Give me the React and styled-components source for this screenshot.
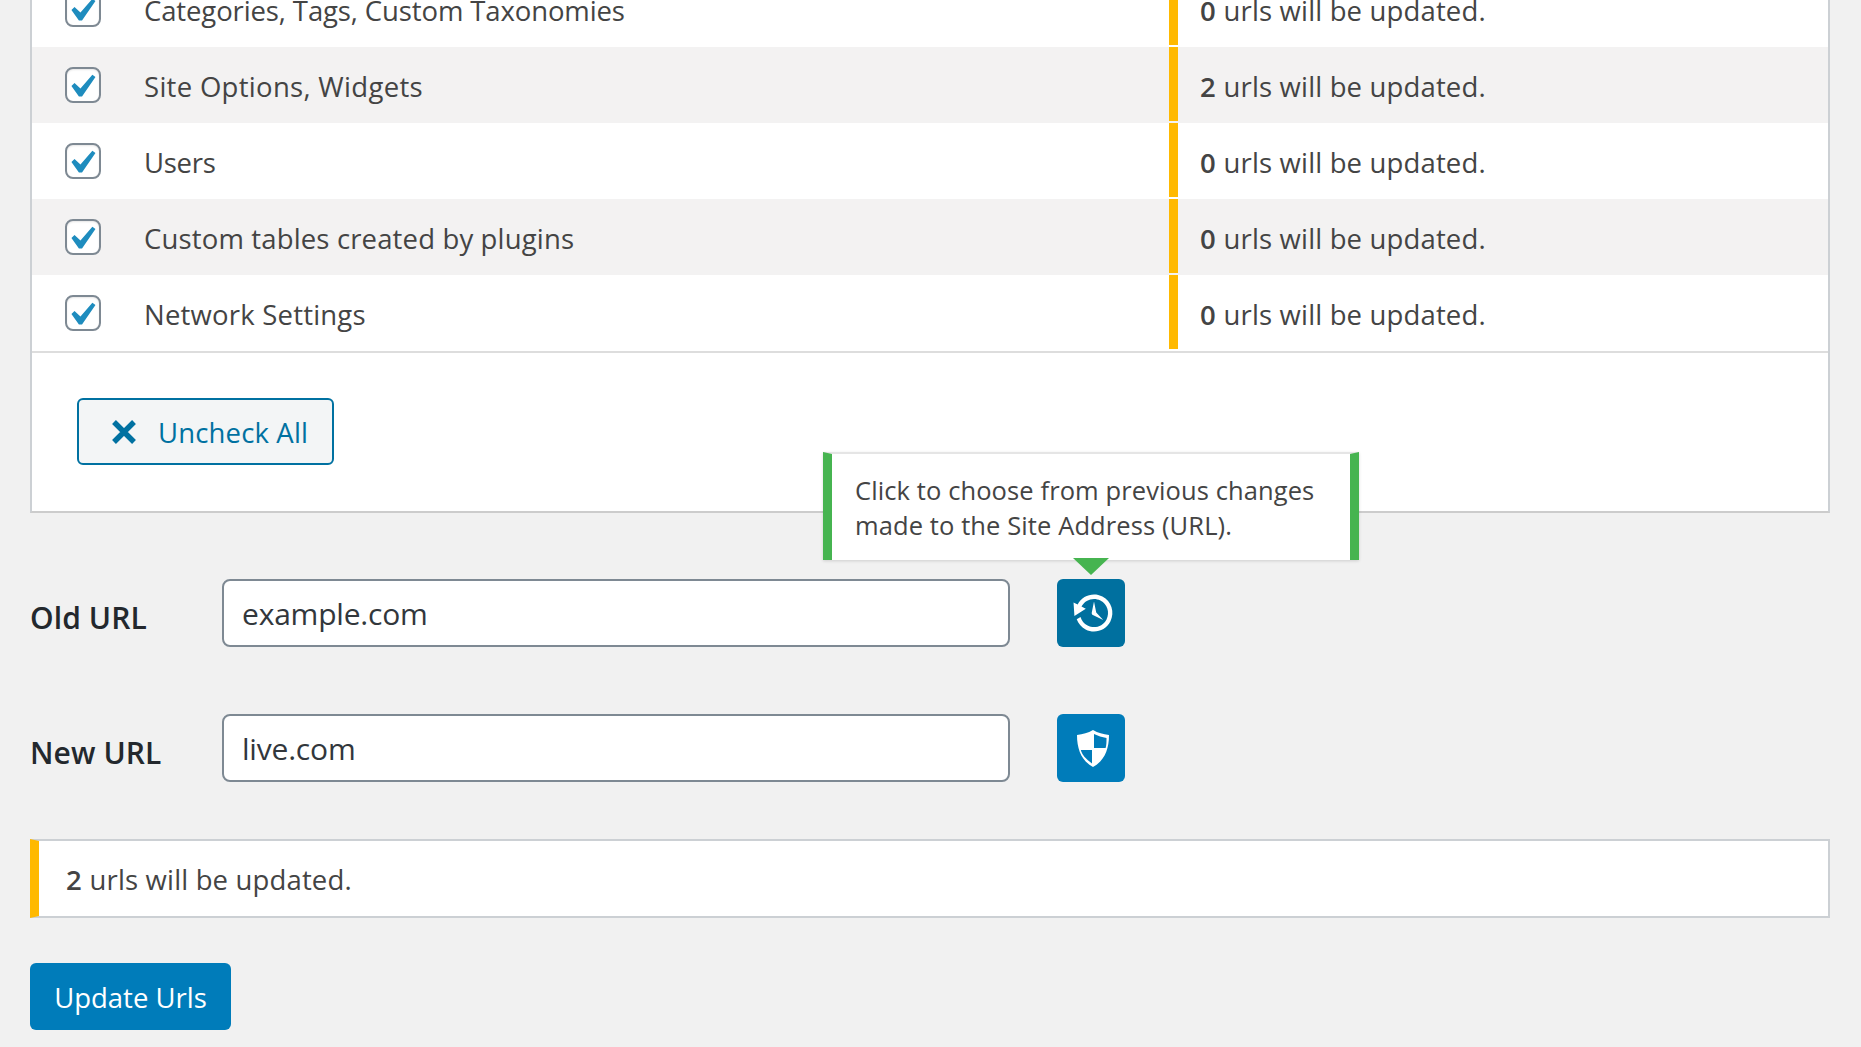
import React from 'react'
import styled, { createGlobalStyle } from 'styled-components'

const GlobalStyle = createGlobalStyle`
  html, body {
    margin: 0;
    padding: 0;
    background: #f1f1f1;
  }
  * {
    box-sizing: border-box;
  }
`

const Page = styled.div`
  width: 1861px;
  height: 1047px;
  overflow: hidden;
  padding: 0 31px 0 30px;
  font-family: "Open Sans", "Liberation Sans", sans-serif;
  font-size: 27.5px;
  letter-spacing: 0.15px;
  color: #444;
`

const Panel = styled.div`
  margin-top: -29px;
  background: #fff;
  border: 2px solid #ccd0d4;
  border-top: 0;
  border-bottom-color: #ccc;
`

const Row = styled.div`
  display: flex;
  height: 76px;
  background: ${(p) => (p.$alt ? '#f3f2f2' : '#fff')};
`

const RowLabel = styled.div`
  width: 1137px;
  display: flex;
  align-items: center;
  padding-left: 33px;
`

const RowText = styled.span`
  padding-top: 2px;
  letter-spacing: ${(p) => p.$track}px;
`

const CheckBox = styled.span`
  width: 36px;
  height: 36px;
  flex: none;
  display: flex;
  align-items: center;
  justify-content: center;
  margin-right: 43px;
  background: #fff;
  border: 2px solid #7e8993;
  border-radius: 8px;
  box-shadow: inset 0 1px 2px rgba(0, 0, 0, 0.1);
`

const Bar = styled.div`
  width: 9px;
  flex: none;
  margin-bottom: 2px;
  background: #ffb900;
`

const RowResult = styled.div`
  display: flex;
  align-items: center;
  padding: 2px 0 0 22px;
`

const Count = styled.b`
  font-weight: 600;
  margin-right: 0.28em;
`

const PanelFooter = styled.div`
  border-top: 2px solid #ddd;
  padding: 45px 0 46px 45px;
`

const UncheckButton = styled.button`
  display: flex;
  align-items: center;
  width: 257px;
  height: 67px;
  padding: 0 0 0 32px;
  font: inherit;
  letter-spacing: inherit;
  color: #0071a1;
  background: #f3f5f6;
  border: 2px solid #0071a1;
  border-radius: 6px;
`

const ButtonLabel = styled.span`
  margin-left: 21px;
  padding-top: 2px;
`

const UrlRow = styled.div`
  display: flex;
  align-items: center;
  height: 68px;
  margin-top: ${(p) => p.$top}px;
`

const UrlLabel = styled.label`
  width: 192px;
  padding-top: 8px;
  font-weight: 600;
  font-size: 30px;
  letter-spacing: 0.1px;
  color: #23282d;
`

const UrlInput = styled.div`
  width: 788px;
  height: 68px;
  display: flex;
  align-items: center;
  padding: 1px 0 0 18px;
  font-size: 30px;
  letter-spacing: -0.2px;
  color: #32373c;
  background: #fff;
  border: 2px solid #7e8993;
  border-radius: 8px;
`

const IconWrap = styled.div`
  position: relative;
  margin-left: 47px;
`

const IconButton = styled.button`
  width: 68px;
  height: 68px;
  display: flex;
  align-items: center;
  justify-content: center;
  padding: 0 0 0 ${(p) => p.$shift}px;
  border: 0;
  border-radius: 6px;
  background: ${(p) => p.$bg};
`

const Tooltip = styled.div`
  position: absolute;
  left: 50%;
  bottom: calc(100% + 19px);
  transform: translateX(-50%);
  width: 536px;
  height: 108px;
  padding: 19px 0 0 23px;
  font-size: 25.5px;
  letter-spacing: 0.1px;
  line-height: 35px;
  white-space: nowrap;
  background: #fff;
  border-left: 9px solid #46b450;
  border-right: 9px solid #46b450;
  border-top: 2px solid #e5e5e5;
  box-shadow: 0 1px 3px rgba(0, 0, 0, 0.15);

  &::after {
    content: '';
    position: absolute;
    left: 50%;
    top: 100%;
    margin: -2px 0 0 -18px;
    border-left: 18px solid transparent;
    border-right: 18px solid transparent;
    border-top: 17px solid #46b450;
  }
`

const Notice = styled.div`
  height: 79px;
  margin-top: 57px;
  display: flex;
  align-items: center;
  padding: 1px 0 0 27px;
  background: #fff;
  border: 2px solid #ccd0d4;
  border-left: 9px solid #ffb900;
`

const UpdateButton = styled.button`
  display: block;
  width: 201px;
  height: 67px;
  margin-top: 45px;
  padding: 1px 0 0;
  font: inherit;
  letter-spacing: 0;
  color: #fff;
  background: #007cba;
  border: 0;
  border-radius: 6px;
`

const CheckMark = () => (
  <svg width="25" height="23" viewBox="5.6 4.6 10.8 9.8">
    <path fill="#1e8cbe" d="M14.83 4.89l1.34.94-5.81 8.38H9.02L5.78 9.67l1.34-1.25 2.57 2.4z" />
  </svg>
)

const CrossIcon = () => (
  <svg width="26" height="26" viewBox="0 0 26 26">
    <path d="M3 3 L23 23 M23 3 L3 23" stroke="#0071a1" strokeWidth="5.4" fill="none" />
  </svg>
)

const HistoryIcon = () => (
  <svg width="46" height="46" viewBox="0 0 20 20">
    <path
      fill="#fff"
      d="M13.65 2.88c3.93 2.01 5.48 6.84 3.47 10.77s-6.83 5.48-10.77 3.47c-1.87-.96-3.2-2.56-3.86-4.4l1.64-1.03c.45 1.57 1.52 2.95 3.08 3.76 3.01 1.54 6.69.35 8.23-2.66 1.55-3.01.36-6.69-2.65-8.24C9.78 3.01 6.1 4.2 4.56 7.21l1.88.97-4.95 3.08-.39-5.82 1.78.91C4.9 2.42 9.73.87 13.65 2.88zm-4.36 7.83C9.11 10.53 9 10.28 9 10c0-.07.03-.12.04-.19h-.01L10 5l.97 4.81L14 13l-4.5-2.12.02-.02c-.08-.04-.16-.09-.23-.15z"
    />
  </svg>
)

const ShieldIcon = () => (
  <svg width="32" height="37" viewBox="0 0 32 37">
    <path fill="#fff" d="M16 0 C21 3 26 4 32 5 C32 20 27 31 16 37 C5 31 0 20 0 5 C6 4 11 3 16 0Z" />
    <path fill="#007cba" d="M17 4 C21 6 25 7 29.5 8 C29.5 12 29.5 15 28.6 18 L17 18Z" />
    <path fill="#007cba" d="M3.8 20 L15 20 L15 33.5 C9 29 5 25 3.8 20Z" />
  </svg>
)

const rows = [
  { name: 'Categories, Tags, Custom Taxonomies', count: 0, track: -0.12 },
  { name: 'Site Options, Widgets', count: 2, alt: true, track: 0.3 },
  { name: 'Users', count: 0, track: -0.3 },
  { name: 'Custom tables created by plugins', count: 0, alt: true, track: 0.15 },
  { name: 'Network Settings', count: 0, track: 0.2 },
]

const App = () => {
  return (
    <Page>
      <GlobalStyle />
      <Panel>
        {rows.map((row) => (
          <Row key={row.name} $alt={row.alt}>
            <RowLabel>
              <CheckBox>
                <CheckMark />
              </CheckBox>
              <RowText $track={row.track}>{row.name}</RowText>
            </RowLabel>
            <Bar />
            <RowResult>
              <span>
                <Count>{row.count}</Count>urls will be updated.
              </span>
            </RowResult>
          </Row>
        ))}
        <PanelFooter>
          <UncheckButton>
            <CrossIcon />
            <ButtonLabel>Uncheck All</ButtonLabel>
          </UncheckButton>
        </PanelFooter>
      </Panel>

      <UrlRow $top={66}>
        <UrlLabel>Old URL</UrlLabel>
        <UrlInput>example.com</UrlInput>
        <IconWrap>
          <Tooltip>
            Click to choose from previous changes
            <br />
            made to the Site Address (URL).
          </Tooltip>
          <IconButton $bg="#00709f" $shift={5}>
            <HistoryIcon />
          </IconButton>
        </IconWrap>
      </UrlRow>

      <UrlRow $top={67}>
        <UrlLabel>New URL</UrlLabel>
        <UrlInput>live.com</UrlInput>
        <IconWrap>
          <IconButton $bg="#007cba" $shift={4}>
            <ShieldIcon />
          </IconButton>
        </IconWrap>
      </UrlRow>

      <Notice>
        <span>
          <Count>2</Count>urls will be updated.
        </span>
      </Notice>

      <UpdateButton>Update Urls</UpdateButton>
    </Page>
  )
}

export default App
